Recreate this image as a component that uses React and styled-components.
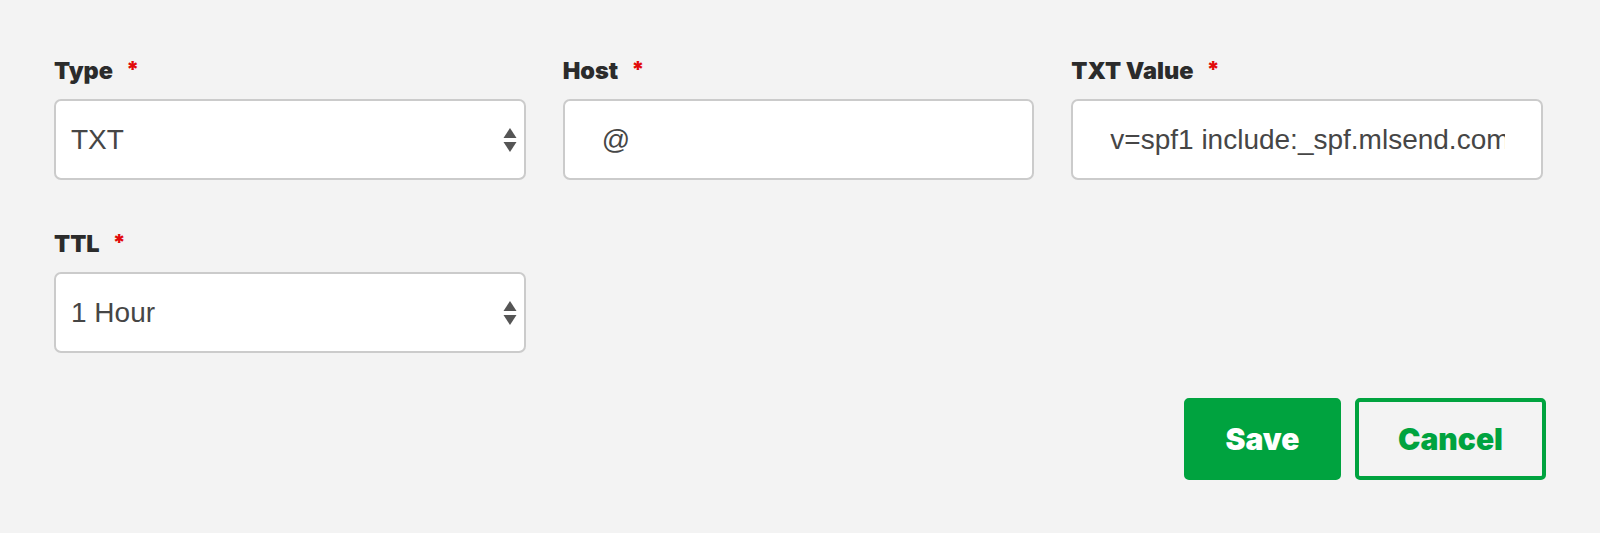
import React from "react";
import styled, { createGlobalStyle } from "styled-components";

const GlobalStyle = createGlobalStyle`
  html, body {
    margin: 0;
    padding: 0;
    background: #f3f3f3;
  }
  * {
    box-sizing: border-box;
  }
`;

const Page = styled.div`
  width: 1600px;
  height: 533px;
  padding: 59px 57px 0 54px;
  background: #f3f3f3;
`;

const FieldGrid = styled.div`
  display: grid;
  grid-template-columns: repeat(3, 1fr);
  column-gap: 37px;
  row-gap: 52px;
`;

const Field = styled.div`
  display: flex;
  flex-direction: column;
`;

const Label = styled.label`
  display: flex;
  align-items: flex-start;
  font-family: Inter, "Liberation Sans", sans-serif;
  font-weight: 900;
  font-size: 23.5px;
  line-height: 24px;
  color: #2b2b2b;
  margin-bottom: 16px;
`;

const Required = styled.span`
  color: #e20a0a;
  font-size: 22px;
  line-height: 20px;
  margin-left: 13px;
`;

const boxStyles = `
  width: 100%;
  height: 81px;
  border: 2px solid #cbcbcb;
  border-radius: 7px;
  background: #fff;
  font-family: "Liberation Sans", Arial, sans-serif;
  font-size: 28px;
  color: #464646;
  outline: none;
`;

const TextInput = styled.input`
  ${boxStyles}
  padding: 0 36px 0 37px;
`;

const SelectWrap = styled.div`
  position: relative;
`;

const Select = styled.select`
  ${boxStyles}
  appearance: none;
  -webkit-appearance: none;
  padding: 0 40px 0 15px;
`;

const Arrows = styled.svg`
  position: absolute;
  right: 8px;
  top: 50%;
  transform: translateY(-50%);
  pointer-events: none;
`;

const Actions = styled.div`
  display: flex;
  justify-content: flex-end;
  gap: 14px;
  margin-top: 45px;
  margin-right: -3px;
`;

const Button = styled.button`
  height: 82px;
  width: ${(p) => p.$width}px;
  border-radius: 5px;
  font-family: Inter, "Liberation Sans", sans-serif;
  font-weight: 900;
  font-size: 30px;
  cursor: pointer;
  border: 4px solid #00a33f;
  background: ${(p) => (p.$primary ? "#00a33f" : "transparent")};
  color: ${(p) => (p.$primary ? "#fff" : "#00a33f")};
`;

function SelectArrows() {
  return (
    <Arrows width="16" height="28" viewBox="0 0 16 28">
      <path d="M8 2 L14.5 12 L1.5 12 Z" fill="#555" />
      <path d="M8 26 L14.5 16 L1.5 16 Z" fill="#555" />
    </Arrows>
  );
}

function SelectField({ label, value, options }) {
  return (
    <Field>
      <Label>
        {label}
        <Required>*</Required>
      </Label>
      <SelectWrap>
        <Select defaultValue={value}>
          {options.map((o) => (
            <option key={o}>{o}</option>
          ))}
        </Select>
        <SelectArrows />
      </SelectWrap>
    </Field>
  );
}

function InputField({ label, value }) {
  return (
    <Field>
      <Label>
        {label}
        <Required>*</Required>
      </Label>
      <TextInput defaultValue={value} />
    </Field>
  );
}

export default function App() {
  return (
    <Page>
      <GlobalStyle />
      <FieldGrid>
        <SelectField label="Type" value="TXT" options={["A", "CNAME", "MX", "TXT"]} />
        <InputField label="Host" value="@" />
        <InputField label="TXT Value" value="v=spf1 include:_spf.mlsend.com ~all" />
        <SelectField label="TTL" value="1 Hour" options={["1/2 Hour", "1 Hour", "1 Day"]} />
      </FieldGrid>
      <Actions>
        <Button $primary $width={157}>Save</Button>
        <Button $width={191}>Cancel</Button>
      </Actions>
    </Page>
  );
}
